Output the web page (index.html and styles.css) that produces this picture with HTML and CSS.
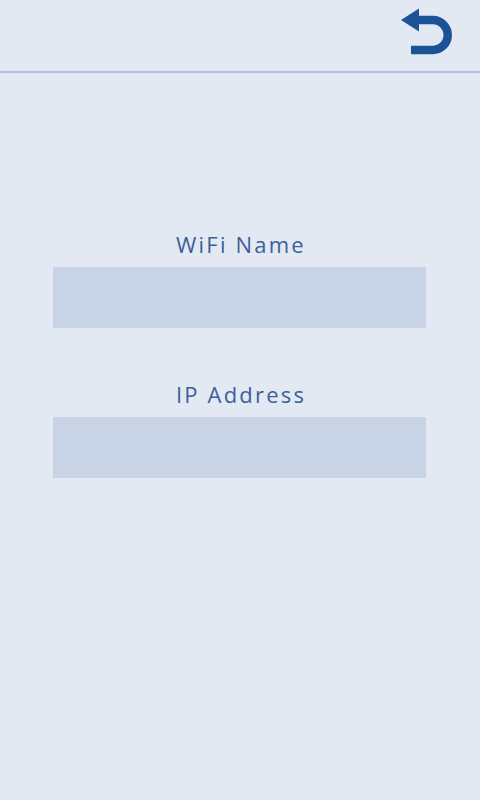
FILE: index.html
```html
<!DOCTYPE html>
<html>
<head>
<meta charset="utf-8">
<link rel="stylesheet" href="styles.css">
</head>
<body>
<header class="topbar">
  <button class="back" aria-label="Back">
    <svg width="56" height="56" viewBox="0 0 56 56">
      <path d="M17 20 H32.75 A15 15 0 0 1 32.75 50 H11" fill="none" stroke="#1c5396" stroke-width="8.5"/>
      <path d="M1 20 L19 8.5 V31.5 Z" fill="#1c5396"/>
    </svg>
  </button>
</header>
<main class="form">
  <div class="field">
    <label class="label">WiFi Name</label>
    <div class="input"></div>
  </div>
  <div class="field">
    <label class="label">IP Address</label>
    <div class="input"></div>
  </div>
</main>
</body>
</html>
```
FILE: styles.css
```css
html, body {
  margin: 0;
  padding: 0;
  background: #e2e9f3;
  width: 480px;
  height: 800px;
  overflow: hidden;
  font-family: "Open Sans", "Noto Sans", sans-serif;
}
.topbar {
  height: 71px;
  border-bottom: 2px solid #b0c1da;
  display: flex;
  justify-content: flex-end;
  align-items: flex-start;
}
.back {
  border: none;
  background: none;
  padding: 0;
  margin: 0 24px 0 0;
  width: 56px;
  height: 56px;
}
.back svg { display: block; }
.form {
  padding-top: 156px;
  display: flex;
  flex-direction: column;
  gap: 51px;
}
.field {
  display: flex;
  flex-direction: column;
  align-items: center;
  gap: 8px;
}
.label {
  font-size: 22px;
  font-weight: 500;
  line-height: 30px;
  color: #3d5f99;
  letter-spacing: 2.2px;
  padding-left: 2px;
}
.input {
  align-self: flex-start;
  margin-left: 53px;
  width: 373px;
  height: 61px;
  background: #c8d4e5;
}
```
